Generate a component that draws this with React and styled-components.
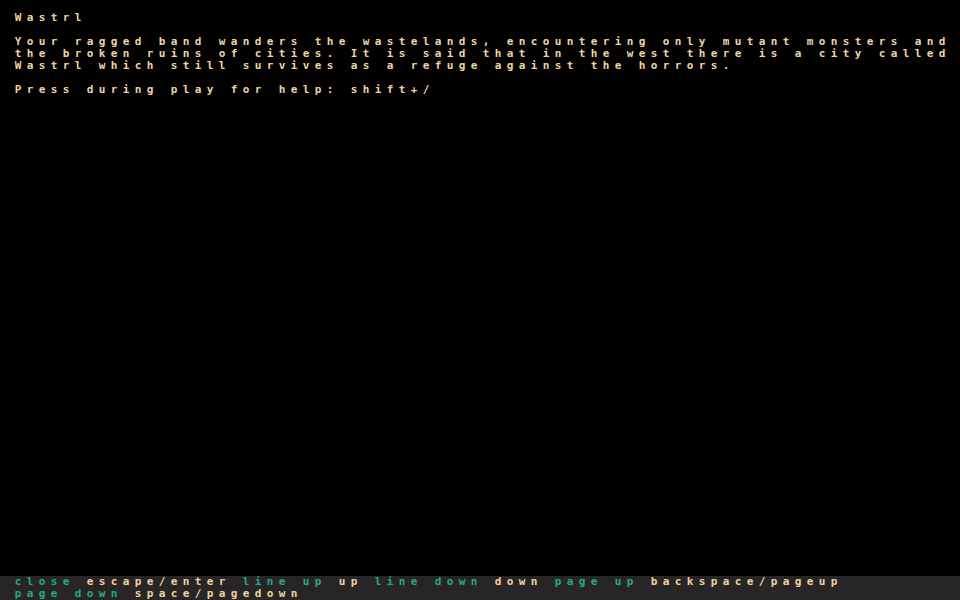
import React from "react";
import styled, { createGlobalStyle } from "styled-components";

const Global = createGlobalStyle`
  html, body { margin: 0; padding: 0; background: #000; }
  body { width: 960px; height: 600px; overflow: hidden; }
`;

const Screen = styled.div`
  width: 960px;
  height: 600px;
  background: #000;
  display: flex;
  flex-direction: column;
  font-family: "DejaVu Sans Mono", "Liberation Mono", monospace;
  font-size: 11px;
  font-weight: bold;
`;

const Body = styled.div`
  flex: 1;
  display: flex;
  flex-direction: column;
  padding: 12px 0 0 12px;
`;

const Row = styled.div`
  height: 12px;
  line-height: 12px;
  display: flex;
  white-space: pre;
`;

const Cell = styled.span`
  display: inline-block;
  width: 12px;
  height: 12px;
  text-align: center;
  color: ${(p) => (p.$tone === "label" ? "#26a884" : "#efd3a3")};
`;

const HelpBar = styled.div`
  height: 24px;
  background: #272525;
  padding-left: 12px;
  display: flex;
  flex-direction: column;
`;

function Text({ children, tone }) {
  return Array.from(children).map((ch, i) => (
    <Cell key={i} $tone={tone}>
      {ch}
    </Cell>
  ));
}

function Line({ parts }) {
  return (
    <Row>
      {parts.map(([t, tone], i) => (
        <Text key={i} tone={tone}>
          {t}
        </Text>
      ))}
    </Row>
  );
}

const bodyLines = [
  "Wastrl",
  "",
  "Your ragged band wanders the wastelands, encountering only mutant monsters and",
  "the broken ruins of cities. It is said that in the west there is a city called",
  "Wastrl which still survives as a refuge against the horrors.",
  "",
  "Press during play for help: shift+/",
];

const helpLines = [
  [
    ["close ", "label"],
    ["escape/enter ", "key"],
    ["line up ", "label"],
    ["up ", "key"],
    ["line down ", "label"],
    ["down ", "key"],
    ["page up ", "label"],
    ["backspace/pageup", "key"],
  ],
  [
    ["page down ", "label"],
    ["space/pagedown", "key"],
  ],
];

export default function App() {
  return (
    <>
      <Global />
      <Screen>
        <Body>
          {bodyLines.map((l, i) => (
            <Line key={i} parts={[[l, "key"]]} />
          ))}
        </Body>
        <HelpBar>
          {helpLines.map((parts, i) => (
            <Line key={i} parts={parts} />
          ))}
        </HelpBar>
      </Screen>
    </>
  );
}
